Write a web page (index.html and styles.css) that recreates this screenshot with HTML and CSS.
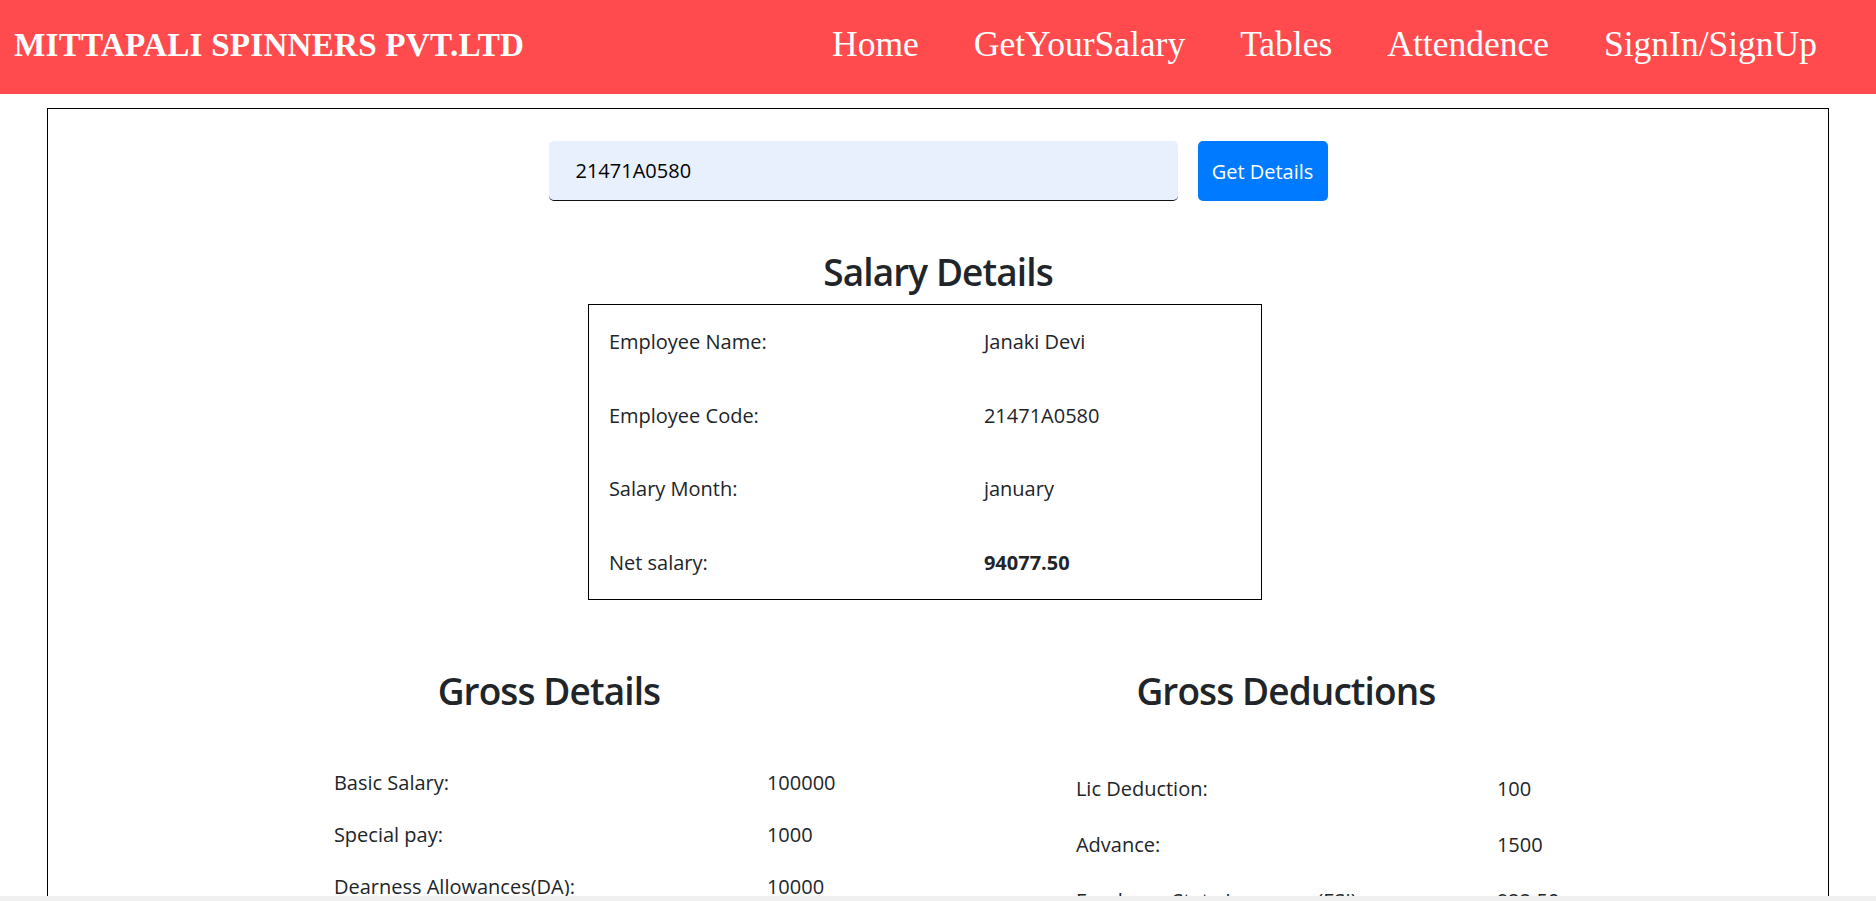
FILE: index.html
```html
<!DOCTYPE html>
<html lang="en">
<head>
<meta charset="utf-8">
<title>Mittapali Spinners - Salary</title>
<link rel="stylesheet" href="styles.css">
</head>
<body>
<nav class="navbar">
  <div class="brand">MITTAPALI SPINNERS PVT.LTD</div>
  <ul class="nav-links">
    <li>Home</li>
    <li>GetYourSalary</li>
    <li>Tables</li>
    <li>Attendence</li>
    <li>SignIn/SignUp</li>
  </ul>
</nav>
<main class="page-box">
  <form class="search">
    <input class="search-input" type="text" value="21471A0580">
    <button class="search-btn" type="button">Get Details</button>
  </form>
  <h2 class="heading">Salary Details</h2>
  <div class="summary">
    <div class="srow"><span>Employee Name:</span><span>Janaki Devi</span></div>
    <div class="srow"><span>Employee Code:</span><span>21471A0580</span></div>
    <div class="srow"><span>Salary Month:</span><span>january</span></div>
    <div class="srow"><span>Net salary:</span><span class="bold">94077.50</span></div>
  </div>
  <div class="columns">
    <section class="col col-left">
      <h2 class="heading">Gross Details</h2>
      <div class="list list-left">
        <div class="lrow"><span>Basic Salary:</span><span>100000</span></div>
        <div class="lrow"><span>Special pay:</span><span>1000</span></div>
        <div class="lrow"><span>Dearness Allowances(DA):</span><span>10000</span></div>
        <div class="lrow"><span>House Rent Allowance(HRA):</span><span>5000</span></div>
      </div>
    </section>
    <section class="col col-right">
      <h2 class="heading">Gross Deductions</h2>
      <div class="list list-right">
        <div class="lrow"><span>Lic Deduction:</span><span>100</span></div>
        <div class="lrow"><span>Advance:</span><span>1500</span></div>
        <div class="lrow"><span>Employee State Insurance(ESI):</span><span>922.50</span></div>
        <div class="lrow"><span>Provident Fund(PF):</span><span>1800</span></div>
      </div>
    </section>
  </div>
</main>
<div class="hscroll"></div>
</body>
</html>
```
FILE: styles.css
```css
* { box-sizing: border-box; }
html, body { margin: 0; padding: 0; }
body {
  font-family: "Open Sans", "Noto Sans", sans-serif;
  font-size: 20px;
  line-height: 1.5;
  color: #212529;
  background: #fff;
  overflow: hidden;
}
.navbar {
  height: 94px;
  background: #ff4b4d;
  display: flex;
  align-items: center;
  justify-content: space-between;
  padding: 0 59px 4px 14px;
  font-family: "Liberation Serif", serif;
  color: #fff;
}
.brand {
  font-size: 33.2px;
  font-weight: bold;
  letter-spacing: 0.2px;
}
.nav-links {
  list-style: none;
  margin: 0;
  padding: 0;
  display: flex;
  gap: 55px;
  font-size: 35.5px;
}
.page-box {
  width: 95%;
  margin: 14px auto 0;
  border: 1px solid #000;
  padding: 32px 0 60px;
}
.search {
  display: flex;
  justify-content: center;
  gap: 20px;
  margin: 0;
}
.search-input {
  width: 629px;
  height: 60px;
  border: none;
  border-bottom: 1px solid #111;
  border-radius: 5px;
  background: #e8f0fe;
  padding: 0 27px;
  font-family: inherit;
  font-size: 20px;
  color: #000;
  outline: none;
}
.search-btn {
  width: 130px;
  height: 60px;
  border: none;
  border-radius: 5px;
  background: #007bff;
  color: #fff;
  font-family: inherit;
  font-size: 20px;
  padding: 0;
}
.heading {
  font-size: 37px;
  font-weight: 600;
  letter-spacing: -0.9px;
  line-height: 1.2;
  text-align: center;
  margin: 49px 0 10px;
}
.summary {
  width: 674px;
  margin: 0 0 0 540px;
  border: 1px solid #000;
  padding-left: 20px;
}
.srow {
  display: grid;
  grid-template-columns: 375px 1fr;
  height: 73.5px;
  align-items: center;
}
.bold { font-weight: 700; }
.columns {
  display: flex;
  gap: 187px;
  padding-left: 226px;
}
.col { width: 550px; }
.col .heading { margin: 69px 0 0; }
.list-left { padding: 43.5px 0 0 60px; }
.list-right { padding: 47px 0 0 65px; }
.lrow { display: grid; }
.list-left .lrow { grid-template-columns: 433px 1fr; padding: 11px 0; }
.list-right .lrow { grid-template-columns: 421px 1fr; padding: 13px 0; }
.hscroll {
  position: fixed;
  left: 0;
  right: 0;
  bottom: 0;
  height: 5px;
  background: #f0f0f0;
}
```
